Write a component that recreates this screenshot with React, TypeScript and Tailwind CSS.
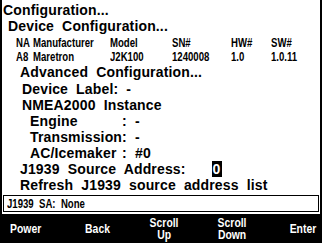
const font = "font-['Liberation_Sans',Arial,sans-serif] font-bold";
const big = `${font} text-[14px] leading-[16px] tracking-[0.15px] text-black whitespace-pre`;
const small = `${font} text-[12px] leading-[14px] text-black whitespace-pre`;

function Row({ indent, children }: { indent: string; children: React.ReactNode }) {
  return <div className={`${big} ${indent} h-4`}>{children}</div>;
}

// condensed text, like the device's narrow font
function Narrow({ children, origin = "origin-left" }: { children: React.ReactNode; origin?: string }) {
  return <span className={`inline-block scale-x-[0.8] ${origin}`}>{children}</span>;
}

const cols = [
  { w: "w-[17px]", h: "NA", v: "A8" },
  { w: "w-[77px]", h: "Manufacturer", v: "Maretron" },
  { w: "w-[62px]", h: "Model", v: "J2K100" },
  { w: "w-[59px]", h: "SN#", v: "1240008" },
  { w: "w-[40px]", h: "HW#", v: "1.0" },
  { w: "w-[40px]", h: "SW#", v: "1.0.11" },
];

const instances = [
  { name: "Engine", value: "-" },
  { name: "Transmission", value: "-" },
  { name: "AC/Icemaker", value: "#0" },
];

const keys = [
  { label: "Power", pos: "w-[78px] pl-[8px] text-left", origin: "origin-left" },
  { label: "Back", pos: "w-[36px] text-center", origin: "origin-center" },
  { label: "Scroll\nUp", pos: "w-[96px] text-center", origin: "origin-center" },
  { label: "Scroll\nDown", pos: "w-[40px] text-center", origin: "origin-center" },
  { label: "Enter", pos: "flex-1 pr-[4px] text-right", origin: "origin-right" },
];

export default function App() {
  return (
    <div className="w-[322px] h-[243px] bg-black overflow-hidden">
      <div className="w-[320px] h-[243px] bg-white border-l-2 border-black flex flex-col">
        <div className="pt-[2px] pl-[1px]">
          <div className={`${big} tracking-[-0.4px] h-4`}>Configuration...</div>
          <Row indent="pl-[5px]">Device  Configuration...</Row>
        </div>
        <div className="pl-[14px] pt-[2px]">
          <div className="flex">
            {cols.map((c) => (
              <div key={c.h} className={`${small} ${c.w}`}>
                <Narrow>{c.h}</Narrow>
              </div>
            ))}
          </div>
          <div className="flex">
            {cols.map((c) => (
              <div key={c.h} className={`${small} ${c.w}`}>
                <Narrow>{c.v}</Narrow>
              </div>
            ))}
          </div>
        </div>
        <div className="pl-[18px]">
          <Row indent="tracking-[-0.2px]">Advanced  Configuration...</Row>
        </div>
        <div className="pl-[20px] pt-[1px]">
          <Row indent="pl-0">Device  Label:  -</Row>
          <Row indent="pl-0">NMEA2000  Instance</Row>
          <div className="grid grid-cols-[auto_auto] justify-start pl-[8px]">
            {instances.map((i) => (
              <div key={i.name} className="contents">
                <div className={`${big} h-4`}>{i.name}</div>
                <div className={`${big} h-4`}>{`:  ${i.value}`}</div>
              </div>
            ))}
          </div>
        </div>
        <div className="pl-[18px]">
          <Row indent="pl-0">
            J1939  Source  Address:
            <span className="ml-[26px] bg-black text-white px-[1px]">0</span>
          </Row>
          <Row indent="tracking-[0.4px]">Refresh  J1939  source  address  list</Row>
        </div>
        <div className="mt-[2px] mx-[1px] h-[17px] border border-black flex items-center pl-[3px]">
          <span className={small}>
            <Narrow>J1939  SA:  None</Narrow>
          </span>
        </div>
        <div className="mt-[2px] flex-1 bg-black flex items-center">
          {keys.map((k) => (
            <div
              key={k.label}
              className={`${k.pos} ${font} text-[13px] leading-[12px] text-white whitespace-pre`}
            >
              <Narrow origin={k.origin}>{k.label}</Narrow>
            </div>
          ))}
        </div>
      </div>
    </div>
  );
}
